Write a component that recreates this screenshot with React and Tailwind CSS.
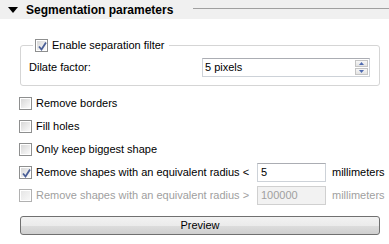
import React from "react";

function CheckBox({ checked, disabled }) {
  return (
    <span
      className={
        "relative flex h-[13px] w-[13px] shrink-0 items-center justify-center border " +
        (disabled ? "border-[#b1b1b1]" : "border-[#8e8f8f]")
      }
    >
      <span
        className={
          "h-[11px] w-[11px] border border-white " +
          (disabled
            ? "bg-gradient-to-br from-[#e6e6e6] to-[#f7f7f7]"
            : "bg-gradient-to-br from-[#d8d8d8] to-[#fafafa]")
        }
      />
      {checked && (
        <svg className="absolute left-[1px] top-[1px]" width="11" height="11" viewBox="0 0 11 11">
          <path d="M2 5.5 L4.5 8.5 L9 1.5" fill="none" stroke="#4a5f97" strokeWidth="1.8" />
        </svg>
      )}
    </span>
  );
}

function CheckRow({ label, checked, disabled, children }) {
  return (
    <div className="flex h-[23px] items-center">
      <CheckBox checked={checked} disabled={disabled} />
      <span className={"ml-[4px] whitespace-nowrap " + (disabled ? "text-[#a0a0a0]" : "text-black")}>
        {label}
      </span>
      {children}
    </div>
  );
}

function SpinArrows() {
  return (
    <div className="ml-auto mr-[1px] flex flex-col gap-px">
      <span className="flex h-[7px] w-[13px] items-center justify-center border border-[#c4c4c4] bg-gradient-to-b from-[#f7f7f7] to-[#e3e3e3]">
        <svg width="5" height="3" viewBox="0 0 5 3">
          <path d="M0 3 L2.5 0 L5 3 Z" fill="#4f6bb0" />
        </svg>
      </span>
      <span className="flex h-[7px] w-[13px] items-center justify-center border border-[#c4c4c4] bg-gradient-to-b from-[#f7f7f7] to-[#e3e3e3]">
        <svg width="5" height="3" viewBox="0 0 5 3">
          <path d="M0 0 L5 0 L2.5 3 Z" fill="#4f6bb0" />
        </svg>
      </span>
    </div>
  );
}

export default function App() {
  return (
    <div className="h-[244px] w-[389px] overflow-hidden bg-white text-[11px] text-black [font-family:Tahoma,'Liberation_Sans',sans-serif]">
      {/* Header */}
      <div className="flex h-[19px] items-center bg-[#f0f0f0]">
        <svg className="ml-[8px]" width="10" height="6" viewBox="0 0 10 6">
          <path d="M0 0 L10 0 L5 6 Z" fill="#000" />
        </svg>
        <span className="ml-[8px] text-[12px] font-bold">Segmentation parameters</span>
        <div className="ml-[20px] h-px flex-1 self-start mt-[8px] bg-[#a0a0a0]" />
      </div>

      <div className="pl-[19px] pr-[9px] pt-[18px]">
        {/* Group box */}
        <fieldset className="ml-px h-[49px] rounded-[3px] border border-[#d5d5d5] pl-[8px] pr-[9px]">
          <legend className="ml-[4px] flex items-center px-[2px]">
            <CheckBox checked />
            <span className="ml-[4px] pr-[2px]">Enable separation filter</span>
          </legend>
          <div className="mt-[4px] flex h-[19px] items-center">
            <span>Dilate factor:</span>
            <div className="ml-auto flex h-[19px] w-[168px] items-center border border-[#cdd2d8] border-t-[#abadb3] bg-white pl-[2px]">
              <span>5 pixels</span>
              <SpinArrows />
            </div>
          </div>
        </fieldset>

        <div className="mt-[6px] flex flex-col">
          <CheckRow label="Remove borders" />
          <CheckRow label="Fill holes" />
          <CheckRow label="Only keep biggest shape" />
          <CheckRow label="Remove shapes with an equivalent radius <" checked>
            <div className="ml-auto flex h-[19px] w-[69px] items-center border border-[#cdd2d8] border-t-[#abadb3] bg-white pl-[3px]">
              5
            </div>
            <span className="ml-[6px] w-[48px] whitespace-nowrap">millimeters</span>
          </CheckRow>
          <CheckRow label="Remove shapes with an equivalent radius >" disabled>
            <div className="ml-auto flex h-[19px] w-[69px] items-center border border-[#d0d0d0] bg-[#f2f2f2] pl-[3px] text-[#a0a0a0]">
              100000
            </div>
            <span className="ml-[6px] w-[48px] whitespace-nowrap text-[#a0a0a0]">millimeters</span>
          </CheckRow>
        </div>

        <button className="mt-[9px] ml-px flex h-[19px] w-[360px] items-center justify-center rounded-[3px] border border-[#707070] bg-[linear-gradient(#f2f2f2_0%,#ebebeb_50%,#dddddd_51%,#cfcfcf_100%)]">
          Preview
        </button>
      </div>
    </div>
  );
}
